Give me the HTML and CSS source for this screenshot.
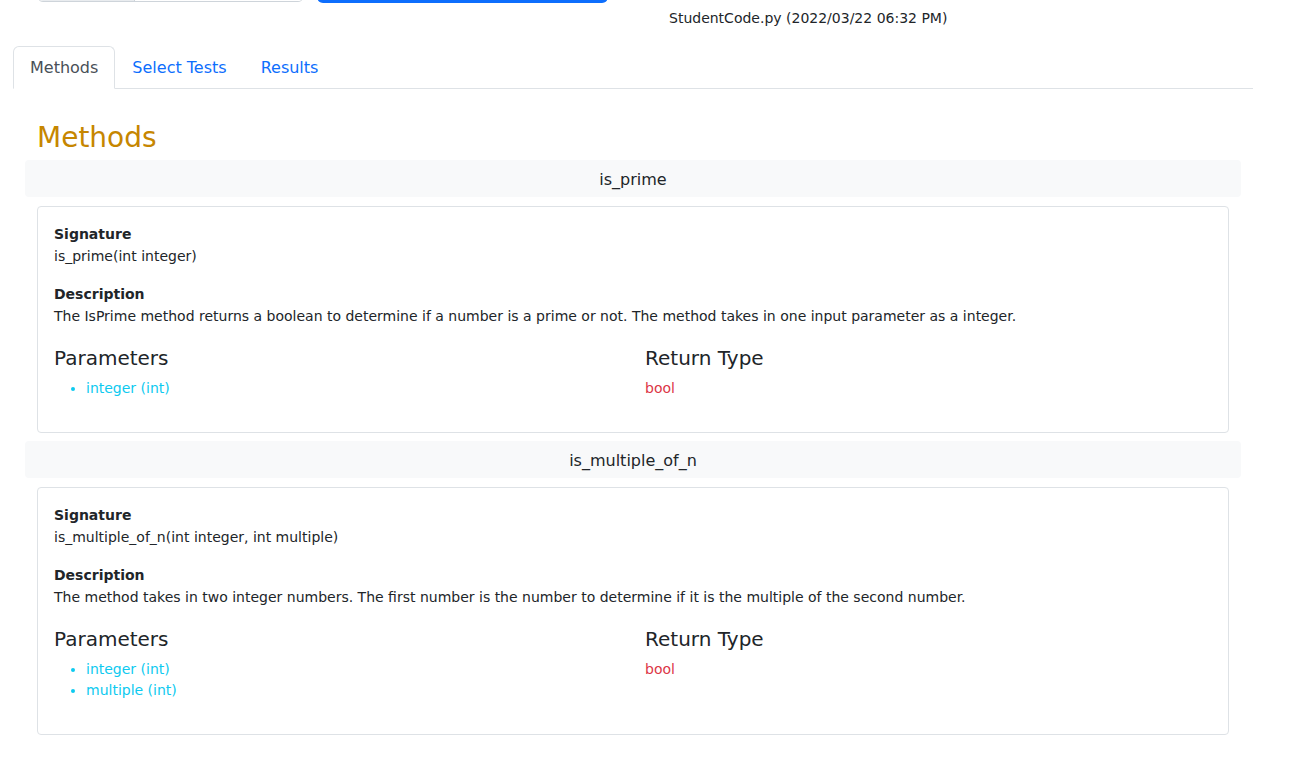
FILE: index.html
```html
<!DOCTYPE html>
<html>
<head>
<meta charset="utf-8">
<link rel="stylesheet" href="styles.css">
</head>
<body>
<div class="page">
  <div class="header">
    <div class="input-group">
      <span class="ig-label"></span>
      <span class="ig-input"></span>
    </div>
    <div class="btn-primary"></div>
    <div class="file">StudentCode.py (2022/03/22 06:32 PM)</div>
  </div>
  <ul class="tabs">
    <li class="tab active">Methods</li>
    <li class="tab">Select Tests</li>
    <li class="tab">Results</li>
  </ul>
  <div class="tab-content">
    <h2 class="title">Methods</h2>

    <div class="method-head">is_prime</div>
    <div class="card">
      <div class="label">Signature</div>
      <div class="text">is_prime(int integer)</div>
      <div class="label gap">Description</div>
      <div class="text">The IsPrime method returns a boolean to determine if a number is a prime or not. The method takes in one input parameter as a integer.</div>
      <div class="cols">
        <div class="col">
          <h4 class="sub">Parameters</h4>
          <ul class="params">
            <li>integer (int)</li>
          </ul>
        </div>
        <div class="col">
          <h4 class="sub">Return Type</h4>
          <div class="ret">bool</div>
        </div>
      </div>
    </div>

    <div class="method-head">is_multiple_of_n</div>
    <div class="card">
      <div class="label">Signature</div>
      <div class="text">is_multiple_of_n(int integer, int multiple)</div>
      <div class="label gap">Description</div>
      <div class="text">The method takes in two integer numbers. The first number is the number to determine if it is the multiple of the second number.</div>
      <div class="cols">
        <div class="col">
          <h4 class="sub">Parameters</h4>
          <ul class="params">
            <li>integer (int)</li>
            <li>multiple (int)</li>
          </ul>
        </div>
        <div class="col">
          <h4 class="sub">Return Type</h4>
          <div class="ret">bool</div>
        </div>
      </div>
    </div>
  </div>
</div>
</body>
</html>
```

FILE: styles.css
```css
html, body {
  margin: 0;
  padding: 0;
  background: #fff;
}
body {
  font-family: "DejaVu Sans", sans-serif;
  color: #212529;
  font-size: 15px;
}
.page {
  width: 1240px;
  margin-left: 13px;
}
.header {
  display: flex;
  align-items: flex-start;
  height: 46px;
  padding-left: 24px;
}
.input-group {
  display: flex;
  width: 267px;
  height: 38px;
  margin-top: -36px;
  border: 1px solid #ced4da;
  border-radius: 6px;
  box-sizing: border-box;
  overflow: hidden;
}
.ig-label {
  width: 96px;
  background: #e9ecef;
  border-right: 1px solid #ced4da;
}
.ig-input {
  flex: 1;
  background: #fff;
}
.btn-primary {
  margin-left: 13px;
  margin-top: -36px;
  width: 291px;
  height: 39px;
  background: #0d6efd;
  border-radius: 6px;
}
.file {
  margin-left: 61px;
  margin-top: 10px;
  font-size: 14px;
  line-height: 17px;
}
.tabs {
  list-style: none;
  margin: 0;
  padding: 0;
  display: flex;
  border-bottom: 1px solid #dee2e6;
}
.tab {
  font-size: 16px;
  color: #0d6efd;
  padding: 0 16px;
  height: 41px;
  line-height: 42px;
  border: 1px solid transparent;
  border-top-left-radius: 6px;
  border-top-right-radius: 6px;
  margin-bottom: -1px;
}
.tab.active {
  color: #495057;
  border-color: #dee2e6 #dee2e6 #fff;
  background: #fff;
}
.tab-content {
  padding: 0 12px;
}
.title {
  font-weight: normal;
  font-size: 28px;
  color: #c68600;
  margin: 31px 0 0 12px;
  line-height: 36px;
  height: 36px;
}
.method-head {
  margin-top: 4px;
  background: #f8f9fa;
  text-align: center;
  font-size: 16px;
  height: 37px;
  line-height: 40px;
  border-radius: 4px;
  margin-bottom: 9px;
}
.card + .method-head {
  margin-top: 8px;
}
.card {
  margin: 0 12px;
  border: 1px solid #dee2e6;
  border-radius: 4px;
  padding: 18px 16px 33px 16px;
}
.label {
  font-weight: bold;
  font-size: 14px;
  line-height: 19px;
}
.label.gap {
  margin-top: 17px;
}
.text {
  font-size: 14px;
  line-height: 24px;
}
.cols {
  display: grid;
  grid-template-columns: 1fr 1fr;
  column-gap: 24px;
  margin-top: 16px;
}
.sub {
  font-weight: normal;
  font-size: 20px;
  line-height: 28px;
  margin: 0 0 6px 0;
}
.params {
  margin: 0;
  padding-left: 32px;
  color: #0dcaf0;
  font-size: 14px;
  line-height: 21px;
}
.ret {
  color: #dc3545;
  font-size: 14px;
  line-height: 21px;
}
```
